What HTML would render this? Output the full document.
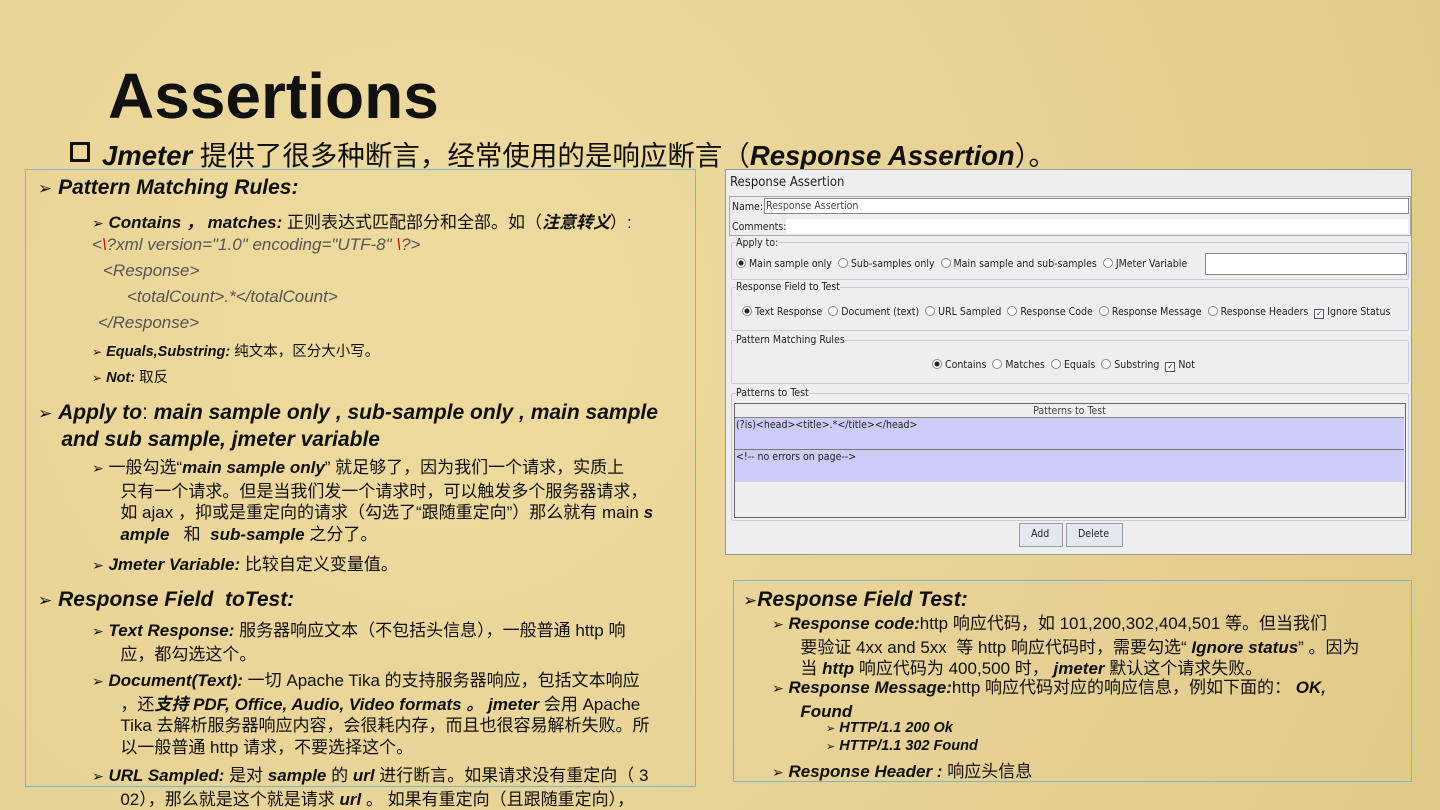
<!DOCTYPE html>
<html><head><meta charset="utf-8"><style>
body{margin:0;width:1440px;height:810px;overflow:hidden;background:#e6d194;background-image:radial-gradient(circle at 30% 40%,#eedc9e 0,#e6d194 60%,#e0ca88 100%);font-family:"Liberation Sans","Noto Sans CJK SC",sans-serif;color:#111;position:relative}
.a{position:absolute;white-space:nowrap}
.bi{font-weight:bold;font-style:italic}
.t{font-size:17px}
.box{position:absolute;border:1px solid #7ab8c8}
.p{position:absolute;font-family:"DejaVu Sans Condensed","Liberation Sans",sans-serif;font-size:10.5px;color:#222;white-space:nowrap}
.g{position:absolute;border:1px solid #c8ccd4;border-radius:2px}
.r{display:inline-block;width:8px;height:8px;border:1px solid #889;border-radius:50%;background:#fff;vertical-align:-1px;margin-right:3px}
.r.on{background:radial-gradient(circle,#222 0 2px,#fff 3px)}
.c{display:inline-block;width:8px;height:8px;border:1px solid #556;background:#fff;font-size:8px;line-height:8px;text-align:center;vertical-align:-1px;margin-right:3px}
.ar{font-size:17px;font-family:"DejaVu Sans",sans-serif}
.ar2{font-size:14px;font-family:"DejaVu Sans",sans-serif}
</style></head><body>
<div class="a" style="left:108px;top:59px;font-size:64px;font-weight:bold">Assertions</div>
<div class="a" style="left:70px;top:133px;font-size:27.5px"><span style="display:inline-block;width:14px;height:14px;border:3px solid #111;vertical-align:3px;margin-right:12px"></span><span class="bi">Jmeter</span> 提供了很多种断言，经常使用的是响应断言（<span class="bi">Response Assertion</span>）。</div>

<div class="box" style="left:25px;top:169px;width:669px;height:616px"></div>
<div class="a" style="left:38px;top:176px;font-size:21px"><span class="ar">➢</span> <span class="bi">Pattern Matching Rules:</span></div>
<div class="a t" style="left:92px;top:208px"><span class="ar2">➢</span> <span class="bi">Contains ， matches:</span> 正则表达式匹配部分和全部。如（<span class="bi">注意转义</span>）:</div>
<div class="a t" style="left:92px;top:235px;font-style:italic;color:#555">&lt;<span style="color:#d00">\</span>?xml version="1.0" encoding="UTF-8" <span style="color:#d00">\</span>?&gt;</div>
<div class="a t" style="left:103px;top:261px;font-style:italic;color:#555">&lt;Response&gt;</div>
<div class="a t" style="left:127px;top:287px;font-style:italic;color:#555">&lt;totalCount&gt;.*&lt;/totalCount&gt;</div>
<div class="a t" style="left:98px;top:313px;font-style:italic;color:#555">&lt;/Response&gt;</div>
<div class="a" style="left:92px;top:340px;font-size:14.5px"><span style="font-size:12px">➢</span> <span class="bi">Equals,Substring:</span> 纯文本，区分大小写。</div>
<div class="a" style="left:92px;top:366px;font-size:14.5px"><span style="font-size:12px">➢</span> <span class="bi">Not:</span> 取反</div>
<div class="a" style="left:38px;top:400px;font-size:21px;line-height:25px"><span class="ar">➢</span> <span class="bi">Apply to</span>: <span class="bi">main sample only , sub-sample only , main sample<br>&nbsp;&nbsp;&nbsp;&nbsp;and sub sample, jmeter variable</span></div>
<div class="a t" style="left:92px;top:457px;line-height:21.5px"><span class="ar2">➢</span> 一般勾选“<span class="bi">main sample only</span>” 就足够了，因为我们一个请求，实质上<br>&nbsp;&nbsp;&nbsp;&nbsp;&nbsp;&nbsp;只有一个请求。但是当我们发一个请求时，可以触发多个服务器请求，<br>&nbsp;&nbsp;&nbsp;&nbsp;&nbsp;&nbsp;如 ajax ，抑或是重定向的请求（勾选了“跟随重定向”）那么就有 main <span class="bi">s</span><br>&nbsp;&nbsp;&nbsp;&nbsp;&nbsp;&nbsp;<span class="bi">ample</span> &nbsp; 和 &nbsp;<span class="bi">sub-sample</span> 之分了。</div>
<div class="a t" style="left:92px;top:550px"><span class="ar2">➢</span> <span class="bi">Jmeter Variable:</span> 比较自定义变量值。</div>
<div class="a" style="left:38px;top:588px;font-size:21px"><span class="ar">➢</span> <span class="bi">Response Field &nbsp;toTest:</span></div>
<div class="a t" style="left:92px;top:620px;line-height:21.5px"><span class="ar2">➢</span> <span class="bi">Text Response:</span> 服务器响应文本（不包括头信息），一般普通 http 响<br>&nbsp;&nbsp;&nbsp;&nbsp;&nbsp;&nbsp;应，都勾选这个。</div>
<div class="a t" style="left:92px;top:670px;line-height:21.5px"><span class="ar2">➢</span> <span class="bi">Document(Text):</span> 一切 Apache Tika 的支持服务器响应，包括文本响应<br>&nbsp;&nbsp;&nbsp;&nbsp;&nbsp;&nbsp;，还<span class="bi">支持 PDF, Office, Audio, Video formats 。 jmeter</span> 会用 Apache<br>&nbsp;&nbsp;&nbsp;&nbsp;&nbsp;&nbsp;Tika 去解析服务器响应内容，会很耗内存，而且也很容易解析失败。所<br>&nbsp;&nbsp;&nbsp;&nbsp;&nbsp;&nbsp;以一般普通 http 请求，不要选择这个。</div>
<div class="a t" style="left:92px;top:765px;line-height:21.5px"><span class="ar2">➢</span> <span class="bi">URL Sampled:</span> 是对 <span class="bi">sample</span> 的 <span class="bi">url</span> 进行断言。如果请求没有重定向（ 3<br>&nbsp;&nbsp;&nbsp;&nbsp;&nbsp;&nbsp;02），那么就是这个就是请求 <span class="bi">url</span> 。 如果有重定向（且跟随重定向），</div>

<!-- JMeter panel -->
<div style="position:absolute;left:725px;top:169px;width:685px;height:384px;background:#eeeeee;border:1px solid #999"></div>
<div class="p" style="left:730px;top:175px;font-size:13px">Response Assertion</div>
<div style="position:absolute;left:729px;top:196px;width:680px;height:38px;border:1px solid #aaa"></div>
<div class="p" style="left:732px;top:201px">Name:</div>
<div style="position:absolute;left:764px;top:198px;width:643px;height:14px;background:#fff;border:1px solid #888"></div>
<div class="p" style="left:766px;top:200px;color:#444">Response Assertion</div>
<div style="position:absolute;left:786px;top:219px;width:622px;height:14px;background:#fff"></div>
<div class="p" style="left:732px;top:221px">Comments:</div>
<div class="g" style="left:731px;top:242px;width:676px;height:36px"></div>
<div class="p" style="left:736px;top:237px;background:#eee">Apply to:</div>
<div class="p" style="left:736px;top:258px"><span class="r on"></span>Main sample only &nbsp;<span class="r"></span>Sub-samples only &nbsp;<span class="r"></span>Main sample and sub-samples &nbsp;<span class="r"></span>JMeter Variable</div>
<div style="position:absolute;left:1205px;top:253px;width:200px;height:20px;background:#fff;border:1px solid #888"></div>
<div class="g" style="left:731px;top:287px;width:676px;height:42px"></div>
<div class="p" style="left:736px;top:281px;background:#eee">Response Field to Test</div>
<div class="p" style="left:742px;top:306px"><span class="r on"></span>Text Response &nbsp;<span class="r"></span>Document (text) &nbsp;<span class="r"></span>URL Sampled &nbsp;<span class="r"></span>Response Code &nbsp;<span class="r"></span>Response Message &nbsp;<span class="r"></span>Response Headers &nbsp;<span class="c">✓</span>Ignore Status</div>
<div class="g" style="left:731px;top:340px;width:676px;height:42px"></div>
<div class="p" style="left:736px;top:334px;background:#eee">Pattern Matching Rules</div>
<div class="p" style="left:932px;top:359px"><span class="r on"></span>Contains &nbsp;<span class="r"></span>Matches &nbsp;<span class="r"></span>Equals &nbsp;<span class="r"></span>Substring &nbsp;<span class="c">✓</span>Not</div>
<div class="g" style="left:731px;top:393px;width:676px;height:126px"></div>
<div class="p" style="left:736px;top:387px;background:#eee">Patterns to Test</div>
<div style="position:absolute;left:734px;top:403px;width:670px;height:113px;background:#eee;border:1px solid #666"></div>
<div class="p" style="left:734px;top:405px;width:671px;text-align:center;color:#444">Patterns to Test</div>
<div style="position:absolute;left:735px;top:417px;width:669px;height:64px;background:#ccccf8;border-top:1px solid #888"></div>
<div style="position:absolute;left:735px;top:449px;width:669px;border-top:1px solid #777"></div>
<div class="p" style="left:736px;top:419px">(?is)&lt;head&gt;&lt;title&gt;.*&lt;/title&gt;&lt;/head&gt;</div>
<div class="p" style="left:736px;top:451px">&lt;!-- no errors on page--&gt;</div>
<div style="position:absolute;left:1019px;top:523px;width:42px;height:22px;background:#e4e8f0;border:1px solid #99a"></div>
<div class="p" style="left:1031px;top:528px">Add</div>
<div style="position:absolute;left:1066px;top:523px;width:55px;height:22px;background:#e4e8f0;border:1px solid #99a"></div>
<div class="p" style="left:1078px;top:528px">Delete</div>

<div class="box" style="left:733px;top:580px;width:677px;height:200px"></div>
<div class="a" style="left:743px;top:588px;font-size:21px"><span class="ar">➢</span><span class="bi">Response Field Test:</span></div>
<div class="a t" style="left:772px;top:613px;line-height:21.5px"><span class="ar2">➢</span> <span class="bi">Response code:</span>http 响应代码，如 101,200,302,404,501 等。但当我们<br>&nbsp;&nbsp;&nbsp;&nbsp;&nbsp;&nbsp;要验证 4xx and 5xx &nbsp;等 http 响应代码时，需要勾选“ <span class="bi">Ignore status</span>” 。因为<br>&nbsp;&nbsp;&nbsp;&nbsp;&nbsp;&nbsp;当 <span class="bi">http</span> 响应代码为 400,500 时， <span class="bi">jmeter</span> 默认这个请求失败。</div>
<div class="a t" style="left:772px;top:677px;line-height:21.5px"><span class="ar2">➢</span> <span class="bi">Response Message:</span>http 响应代码对应的响应信息，例如下面的： <span class="bi">OK,</span><br>&nbsp;&nbsp;&nbsp;&nbsp;&nbsp;&nbsp;<span class="bi">Found</span></div>
<div class="a" style="left:826px;top:720px;font-size:14.5px"><span style="font-size:11px">➢</span> <span class="bi">HTTP/1.1 200 Ok</span></div>
<div class="a" style="left:826px;top:738px;font-size:14.5px"><span style="font-size:11px">➢</span> <span class="bi">HTTP/1.1 302 Found</span></div>
<div class="a t" style="left:772px;top:757px"><span class="ar2">➢</span> <span class="bi">Response Header :</span> 响应头信息</div>
</body></html>
